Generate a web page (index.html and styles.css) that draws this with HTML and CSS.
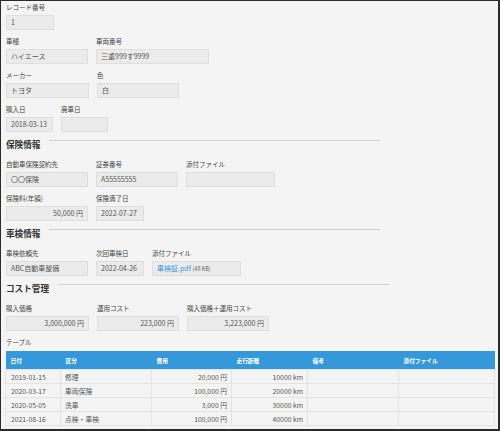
FILE: index.html
```html
<!DOCTYPE html>
<html lang="ja">
<head>
  <meta charset="UTF-8">
  <title>車両レコード</title>
  <link rel="stylesheet" href="styles.css">
</head>
<body>
  <div class="frame">
    <div class="row">
      <div class="field"><div class="lbl">レコード番号</div><div class="val w48">1</div></div>
    </div>
    <div class="row">
      <div class="field"><div class="lbl">車種</div><div class="val">ハイエース</div></div>
      <div class="field"><div class="lbl">車両番号</div><div class="val w113">三重999す9999</div></div>
    </div>
    <div class="row">
      <div class="field"><div class="lbl">メーカー</div><div class="val w83">トヨタ</div></div>
      <div class="field"><div class="lbl">色</div><div class="val">白</div></div>
    </div>
    <div class="row">
      <div class="field"><div class="lbl">購入日</div><div class="val w47">2018-03-13</div></div>
      <div class="field"><div class="lbl">廃車日</div><div class="val w47"></div></div>
    </div>

    <!-- 保険情報 -->
    <div class="section"><span class="sec-title">保険情報</span><span class="sec-line"></span></div>
    <div class="row">
      <div class="field"><div class="lbl">自動車保険契約先</div><div class="val">〇〇保険</div></div>
      <div class="field"><div class="lbl">証券番号</div><div class="val">A55555555</div></div>
      <div class="field"><div class="lbl">添付ファイル</div><div class="val w89"></div></div>
    </div>
    <div class="row">
      <div class="field"><div class="lbl">保険料(年額)</div><div class="val num">50,000 円</div></div>
      <div class="field"><div class="lbl">保険満了日</div><div class="val w48">2022-07-27</div></div>
    </div>

    <!-- 車検情報 -->
    <div class="section"><span class="sec-title">車検情報</span><span class="sec-line"></span></div>
    <div class="row">
      <div class="field"><div class="lbl">車検依頼先</div><div class="val">ABC自動車整備</div></div>
      <div class="field"><div class="lbl">次回車検日</div><div class="val w48">2022-04-26</div></div>
      <div class="field"><div class="lbl">添付ファイル</div><div class="val w89"><a class="file" href="#">車検証.pdf</a> <span class="size">(48 KB)</span></div></div>
    </div>

    <!-- コスト管理 -->
    <div class="section"><span class="sec-title">コスト管理</span><span class="sec-line"></span></div>
    <div class="row">
      <div class="field"><div class="lbl">購入価格</div><div class="val w83 num">3,000,000 円</div></div>
      <div class="field"><div class="lbl">運用コスト</div><div class="val num">223,000 円</div></div>
      <div class="field"><div class="lbl">購入価格＋運用コスト</div><div class="val num">3,223,000 円</div></div>
    </div>

    <div class="lbl tbl-lbl">テーブル</div>
    <table class="sub">
      <thead>
        <tr>
          <th class="c1">日付</th><th class="c2">区分</th><th class="c3">費用</th>
          <th class="c4">走行距離</th><th class="c5">備考</th><th class="c6">添付ファイル</th>
        </tr>
      </thead>
      <tbody>
        <tr><td>2019-01-15</td><td>修理</td><td class="r">20,000 円</td><td class="r">10000 km</td><td></td><td></td></tr>
        <tr><td>2020-03-17</td><td>車両保険</td><td class="r">100,000 円</td><td class="r">20000 km</td><td></td><td></td></tr>
        <tr><td>2020-05-05</td><td>洗車</td><td class="r">3,000 円</td><td class="r">30000 km</td><td></td><td></td></tr>
        <tr><td>2021-08-16</td><td>点検・車検</td><td class="r">100,000 円</td><td class="r">40000 km</td><td></td><td></td></tr>
      </tbody>
    </table>
  </div>
</body>
</html>
```

FILE: styles.css
```css
* {
  box-sizing: border-box;
}

body {
  margin: 0;
  font-family: "Noto Sans CJK JP", "Noto Sans", sans-serif;
  color: #444;
}

.frame {
  width: 500px;
  height: 431px;
  background: #f4f4f4;
  border-style: solid;
  border-color: #2b2b2b;
  border-width: 1px 2px 2px 1px;
  padding: 1px 0 0 5px;
  overflow: hidden;
}

.row {
  display: flex;
  gap: 8px;
  margin-bottom: 6px;
}

.lbl {
  font-size: 6.5px;
  line-height: 10px;
  height: 10px;
  margin-bottom: 3px;
  color: #444;
  white-space: nowrap;
}

/* 値のボックス */
.val {
  width: 82px;
  height: 15px;
  line-height: 13px;
  padding: 0 4px;
  font-size: 7px;
  color: #555;
  background: #ebebeb;
  border: 1px solid #dfdfdf;
  white-space: nowrap;
  overflow: hidden;
}
.val.num { text-align: right; }
.w47 { width: 47px; }
.w48 { width: 48px; }
.w83 { width: 83px; }
.w89 { width: 89px; }
.w113 { width: 113px; }

.file {
  color: #3498db;
  text-decoration: none;
}
.size {
  font-size: 5.5px;
  color: #666;
}

/* セクション見出し */
.section {
  display: flex;
  align-items: center;
  height: 12px;
  margin-bottom: 9px;
}
.sec-title {
  font-size: 8.6px;
  font-weight: bold;
  color: #333;
  line-height: 12px;
}
.sec-line {
  width: 331px;
  height: 1px;
  background: #d2d2d2;
  margin-left: 9px;
  margin-bottom: 8px;
}

/* テーブル */
.sub {
  border-collapse: collapse;
  table-layout: fixed;
  width: 489px;
  margin-left: -1px;
}
.sub th {
  background: #3498db;
  color: #fff;
  font-size: 5.7px;
  font-weight: bold;
  text-align: left;
  height: 19px;
  padding: 0 5px;
  border-top: 1px solid #fff;
}
.sub td {
  font-size: 6.8px;
  color: #555;
  height: 14px;
  padding: 0 4px;
  border: 1px solid #e4e4e4;
  white-space: nowrap;
}
.sub td:first-child { padding-left: 5px; }
.sub td.r { text-align: right; }
.c1 { width: 55px; }
.c2 { width: 91px; }
.c3 { width: 80px; }
.c4 { width: 76px; }
.c5 { width: 91px; }
.c6 { width: 96px; }
```
